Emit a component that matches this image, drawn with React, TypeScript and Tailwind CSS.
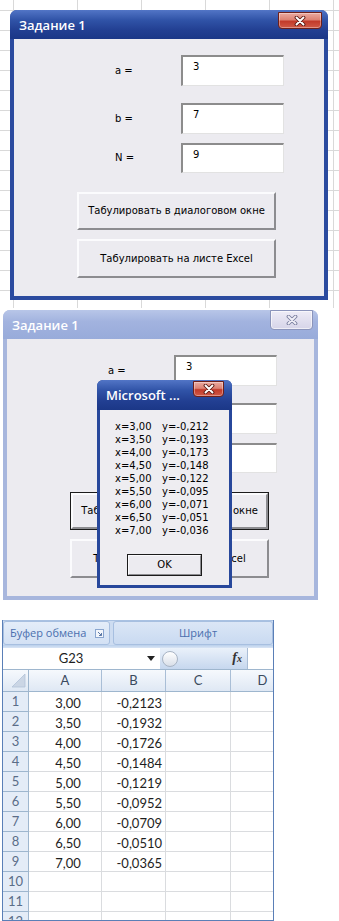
import React from "react";

const DLG = "font-['DejaVu_Sans',Tahoma,sans-serif] text-[10px] leading-[12px] text-black";

function XIcon({ inactive }: { inactive?: boolean }) {
  return (
    <svg width="14" height="10" viewBox="0 0 14 10">
      <path d="M3.5 1.5 L10.5 8.5 M10.5 1.5 L3.5 8.5" stroke={inactive ? "#7c80a0" : "#5c1a14"} strokeWidth="3.8" strokeLinecap="round" />
      <path d="M3.5 1.5 L10.5 8.5 M10.5 1.5 L3.5 8.5" stroke={inactive ? "#f0eff7" : "#ffffff"} strokeWidth="1.9" strokeLinecap="round" />
    </svg>
  );
}

function CloseRed({ small }: { small?: boolean }) {
  return (
    <div
      className={
        (small ? "h-[16px] w-[31px] " : "h-[17px] w-[44px] ") +
        "flex items-center justify-center rounded-b-[4px] border border-[#6e1f19] bg-[linear-gradient(to_bottom,#eaaaa1_0%,#dc8273_45%,#c23a2a_55%,#d05a47_100%)] shadow-[inset_0_0_0_1px_rgba(255,255,255,0.35)]"
      }
    >
      <XIcon />
    </div>
  );
}

function CloseInactive() {
  return (
    <div className="flex h-[20px] w-[43px] items-center justify-center rounded-b-[4px] border border-[#8b94bb] bg-[linear-gradient(to_bottom,#eeecf7,#d6d4e8)] shadow-[inset_0_0_0_1px_rgba(255,255,255,0.6)]">
      <XIcon inactive />
    </div>
  );
}

function Field({ value, h }: { value: string; h: string }) {
  return (
    <div
      className={
        h +
        " w-[103px] border-t-2 border-l-2 border-b border-r border-t-[#8c8c8c] border-l-[#8c8c8c] border-b-[#e2e2e2] border-r-[#e2e2e2] bg-white pl-[10px] pt-[4px] " +
        DLG
      }
    >
      {value}
    </div>
  );
}

function Btn({ label, h, focused }: { label: string; h: string; focused?: boolean }) {
  return (
    <div className={h + " ml-[63px] flex w-[199px] " + (focused ? "border border-[#1b1b1b]" : "")}>
      <div className="flex flex-1 items-center justify-center border-2 border-t-[#fbfbfd] border-l-[#fbfbfd] border-r-[#8c8c90] border-b-[#8c8c90] bg-[#ecebf0]">
        <span className={DLG}>{label}</span>
      </div>
    </div>
  );
}

function Dialog({ active, focused, children }: { active: boolean; focused?: boolean; children?: React.ReactNode }) {
  return (
    <div
      className={
        active
          ? "relative flex h-[290px] w-[318px] flex-col rounded-t-[7px] bg-[#2b4b9f]"
          : "relative flex h-[290px] w-[315px] flex-col rounded-t-[7px] bg-[#a7b6dd]"
      }
    >
      <div
        className={
          "flex h-[29px] shrink-0 items-start justify-between rounded-t-[7px] pl-[9px] pr-[5px] " +
          (active
            ? "bg-[linear-gradient(to_bottom,#5275c6_0%,#3053a7_35%,#223f92_70%,#1b3787_100%)]"
            : "bg-[linear-gradient(to_bottom,#b8c6e8_0%,#a2b3df_40%,#98abda_100%)]")
        }
      >
        <span className="pt-[6px] font-['Open_Sans',sans-serif] text-[13px] font-semibold leading-[18px] text-white">
          Задание 1
        </span>
        <div className={active ? "pt-[2px] pr-[1px]" : ""}>{active ? <CloseRed /> : <CloseInactive />}</div>
      </div>
      <div className="mx-[4px] mb-[4px] flex flex-1 flex-col bg-[#ecebf0] pt-[16px]">
        <div className="flex h-[31px] items-center">
          <span className={"ml-[101px] w-[66px] " + DLG}>a =</span>
          <Field value="3" h="h-[31px]" />
        </div>
        <div className="mt-[17px] flex h-[31px] items-center">
          <span className={"ml-[101px] w-[66px] " + DLG}>b =</span>
          <Field value="7" h="h-[31px]" />
        </div>
        <div className="mt-[9px] flex h-[30px] items-center">
          <span className={"ml-[101px] w-[66px] " + DLG}>N =</span>
          <Field value="9" h="h-[30px]" />
        </div>
        <div className="mt-[19px]">
          <Btn label="Табулировать в диалоговом окне" h="h-[38px]" focused={focused} />
        </div>
        <div className="mt-[9px]">
          <Btn label="Табулировать на листе Excel" h="h-[39px]" />
        </div>
      </div>
      {children}
    </div>
  );
}

const msgLines: [string, string][] = [
  ["x=3,00", "y=-0,212"],
  ["x=3,50", "y=-0,193"],
  ["x=4,00", "y=-0,173"],
  ["x=4,50", "y=-0,148"],
  ["x=5,00", "y=-0,122"],
  ["x=5,50", "y=-0,095"],
  ["x=6,00", "y=-0,071"],
  ["x=6,50", "y=-0,051"],
  ["x=7,00", "y=-0,036"],
];

function MsgBox() {
  return (
    <div className="absolute left-[94px] top-[70px] flex h-[208px] w-[135px] flex-col rounded-t-[6px] bg-[#27479b]">
      <div className="flex h-[30px] shrink-0 items-start justify-between rounded-t-[6px] bg-[linear-gradient(to_bottom,#5275c6_0%,#3053a7_35%,#223f92_70%,#1b3787_100%)] pl-[9px] pr-[8px]">
        <span className="pt-[6px] font-['Open_Sans',sans-serif] text-[13px] font-semibold leading-[18px] text-white">
          Microsoft ...
        </span>
        <div className="pt-[1px]">
          <CloseRed small />
        </div>
      </div>
      <div className="mx-[3px] mb-[3px] flex flex-1 flex-col bg-[#eeedf1] pt-[10px]">
        {msgLines.map(([x, y]) => (
          <div key={x} className="flex h-[13px] items-center">
            <span className={"ml-[15px] w-[47px] " + DLG}>{x}</span>
            <span className={DLG}>{y}</span>
          </div>
        ))}
        <div className="ml-[27px] mt-[17px] flex h-[22px] w-[75px] border border-[#1b1b1b]">
          <div className="flex flex-1 items-center justify-center border border-t-[#fbfbfd] border-l-[#fbfbfd] border-r-[#8c8c90] border-b-[#8c8c90] bg-[#ecebf0]">
            <span className={DLG}>OK</span>
          </div>
        </div>
      </div>
    </div>
  );
}

const sheetData: [string, string][] = [
  ["3,00", "-0,2123"],
  ["3,50", "-0,1932"],
  ["4,00", "-0,1726"],
  ["4,50", "-0,1484"],
  ["5,00", "-0,1219"],
  ["5,50", "-0,0952"],
  ["6,00", "-0,0709"],
  ["6,50", "-0,0510"],
  ["7,00", "-0,0365"],
];

const CELL = "font-['Lato',sans-serif] text-[13px] leading-[16px] text-[#1e1e1e]";

function Sheet() {
  const rows = Array.from({ length: 12 }, (_, i) => i);
  return (
    <div className="flex h-[301px] w-[272px] flex-col overflow-hidden border-x border-b border-[#5a7fb7]">
      {/* ribbon group labels */}
      <div className="flex h-[25px] shrink-0 border-t border-[#a9c1e2] bg-[#cddcf1]">
        <div className="flex w-[107px] items-center justify-between rounded-[3px] border border-[#a7bfe0] bg-[linear-gradient(to_bottom,#e4edf9,#d3e1f4)] pl-[6px] pr-[5px]">
          <span className="font-['Open_Sans',sans-serif] text-[11px] leading-[14px] text-[#4a6fae]">Буфер обмена</span>
          <svg width="9" height="9" viewBox="0 0 9 9">
            <rect x="0.5" y="0.5" width="8" height="8" fill="#f3f6fb" stroke="#8aa6cf" />
            <path d="M3 3 L6.5 6.5 M6.5 4 L6.5 6.5 L4 6.5" stroke="#5b78a6" strokeWidth="1" fill="none" />
          </svg>
        </div>
        <div className="ml-[3px] flex flex-1 items-center rounded-[3px] border border-[#a7bfe0] bg-[linear-gradient(to_bottom,#dbe6f6,#c9daf1)] pl-[65px]">
          <span className="font-['Open_Sans',sans-serif] text-[11px] leading-[14px] text-[#4a6fae]">Шрифт</span>
        </div>
      </div>
      <div className="h-[3px] shrink-0 bg-[linear-gradient(to_bottom,#b9cfeb,#d9e5f5)]" />
      {/* formula bar */}
      <div className="flex h-[22px] shrink-0 border-b border-[#9eb6ce] bg-[linear-gradient(to_bottom,#eaf1fa,#c6d7ee)]">
        <div className="flex w-[157px] items-center bg-white">
          <span className="w-[136px] text-center font-['Lato',sans-serif] text-[13px] text-[#1e1e1e]">G23</span>
          <svg width="8" height="5" viewBox="0 0 8 5" className="ml-[8px]">
            <path d="M0 0 L8 0 L4 5 Z" fill="#222" />
          </svg>
        </div>
        <div className="relative flex flex-1 items-center justify-end pr-[5px]">
          <div className="absolute left-[2px] top-[3px] h-[16px] w-[16px] rounded-full border border-[#a8b4c4] bg-[linear-gradient(to_bottom,#ffffff,#d8dee8)]" />
          <span className="font-['Liberation_Serif',serif] text-[14px] font-bold italic leading-[14px] text-[#333]">
            f<span className="text-[10px]">x</span>
          </span>
        </div>
        <div className="w-[26px] border-l border-[#a9bdd6] bg-white" />
      </div>
      {/* column headers */}
      <div className="flex h-[22px] shrink-0 border-b border-[#9eb6ce] bg-[linear-gradient(to_bottom,#f6f9fd,#dfe8f4)]">
        <div className="relative w-[26px] shrink-0 border-r border-[#9eb6ce]">
          <svg width="26" height="21" viewBox="0 0 26 21" className="absolute left-0 top-0">
            <path d="M22 4 L22 17 L9 17 Z" fill="#cbd6e5" stroke="#b3c3d8" strokeWidth="0.8" />
          </svg>
        </div>
        {[
          ["A", "w-[73px]"],
          ["B", "w-[64px]"],
          ["C", "w-[65px]"],
          ["D", "w-[64px]"],
        ].map(([l, w]) => (
          <div
            key={l}
            className={w + " flex shrink-0 items-center justify-center border-r border-[#a9bed6] font-['Lato',sans-serif] text-[13px] text-[#3a4a5e]"}
          >
            {l}
          </div>
        ))}
      </div>
      {/* rows */}
      {rows.map((i) => {
        const d = sheetData[i];
        return (
          <div key={i} className="flex h-[20px] shrink-0">
            <div className="flex w-[26px] shrink-0 items-center justify-center border-r border-b border-[#9eb6ce] bg-[#e4ecf7] pt-[1px] font-['Lato',sans-serif] text-[13px] text-[#5a6d88]">
              {i + 1}
            </div>
            <div className={"flex w-[73px] shrink-0 items-center justify-center border-r border-b border-[#dadcdf] pl-[6px] pt-[2px] " + CELL}>
              {d ? d[0] : ""}
            </div>
            <div className={"flex w-[64px] shrink-0 items-center justify-end border-r border-b border-[#dadcdf] pr-[3px] pt-[2px] " + CELL}>
              {d ? d[1] : ""}
            </div>
            <div className="w-[65px] shrink-0 border-r border-b border-[#dadcdf]" />
            <div className="w-[64px] shrink-0 border-r border-b border-[#dadcdf]" />
          </div>
        );
      })}
    </div>
  );
}

export default function App() {
  return (
    <div className="h-[921px] w-[339px] overflow-hidden bg-white">
      <div className="h-[308px] bg-white bg-[linear-gradient(to_right,#d9d9d9_1px,transparent_1px),linear-gradient(to_bottom,#d9d9d9_1px,transparent_1px)] bg-size-[64px_20px] bg-position-[13px_10px] pl-[10px] pt-[10px]">
        <Dialog active />
      </div>
      <div className="h-[302px] pl-[3px] pt-[2px]">
        <Dialog active={false} focused>
          <MsgBox />
        </Dialog>
      </div>
      <div className="h-[311px] pl-[2px] pt-[10px]">
        <Sheet />
      </div>
    </div>
  );
}
